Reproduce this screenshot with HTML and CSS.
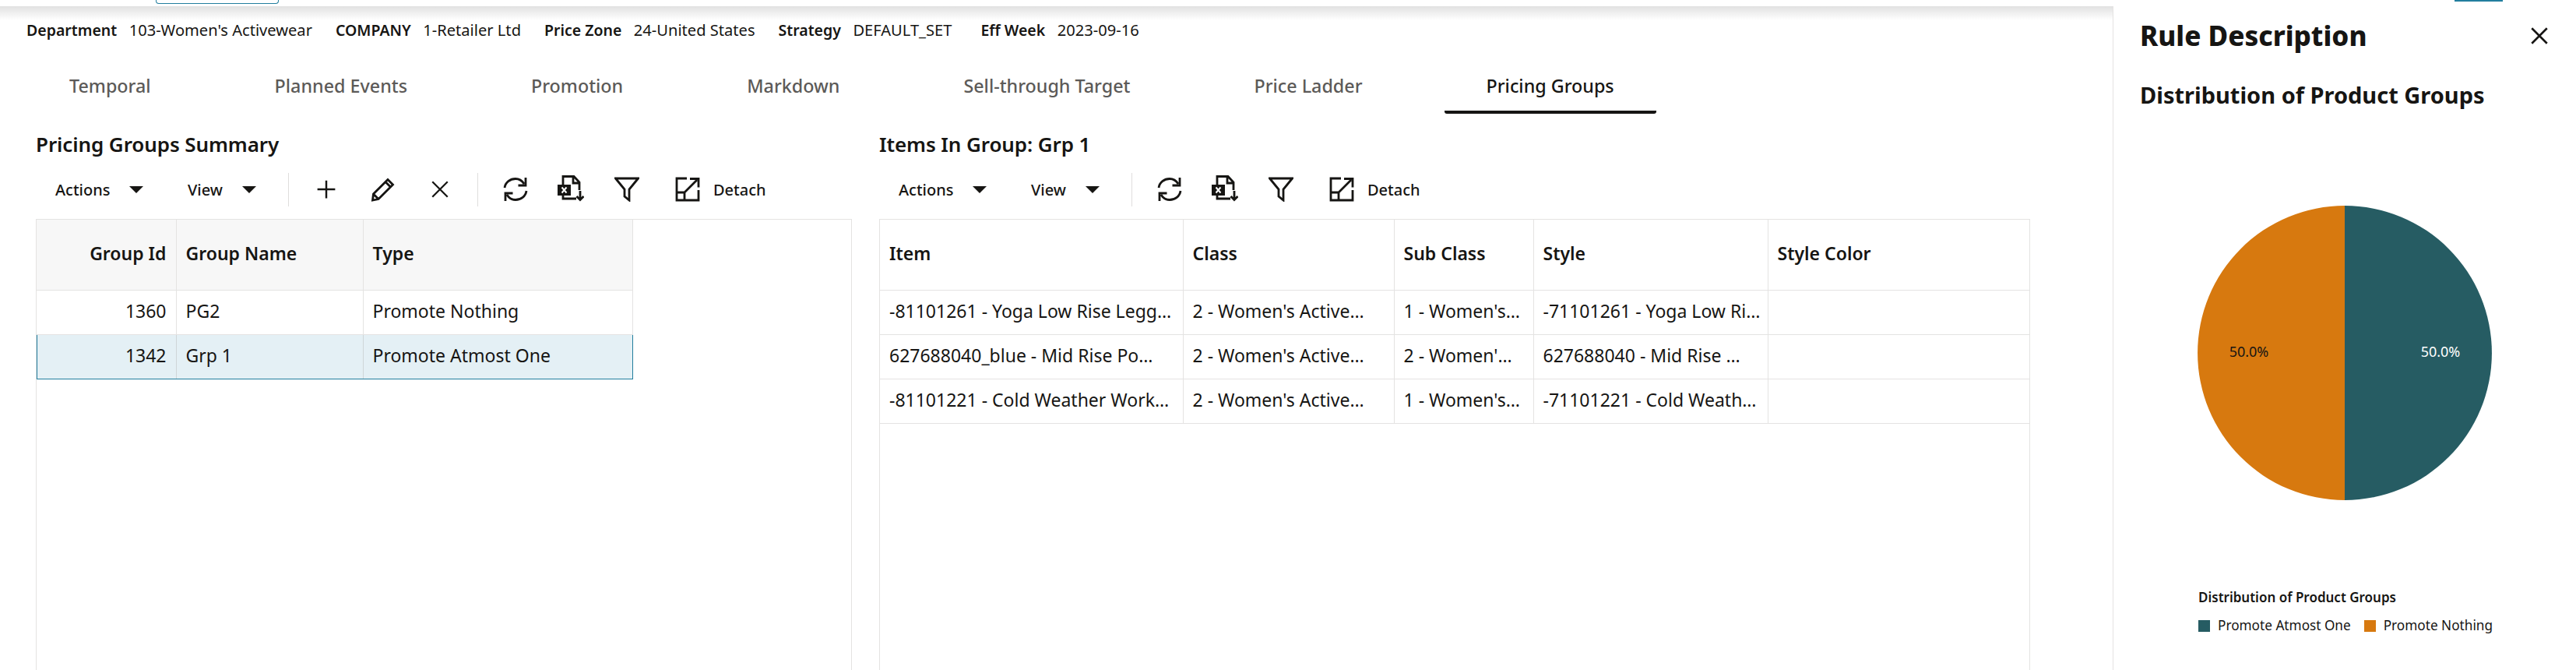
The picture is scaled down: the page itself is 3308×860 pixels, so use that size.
FILE: index.html
```html
<!DOCTYPE html>
<html lang="en">
<head>
    <meta charset="UTF-8">
    <title>Pricing Groups</title>
    <link rel="stylesheet" href="styles.css">
</head>
<body>
    <svg class="sprites" width="0" height="0">
        <symbol id="i-plus" viewBox="0 0 32 32"><path d="M16 3v26M3 16h26"/></symbol>
        <symbol id="i-pencil" viewBox="0 0 32 32"><path d="M2.500 30l1-8L22 3.500l6.500 6.500L10 28.500zM3.500 22l6.500 6.500M19 6.500l6.500 6.500"/></symbol>
        <symbol id="i-close" viewBox="0 0 32 32"><path d="M4 4l24 24M28 4L4 28"/></symbol>
        <symbol id="i-refresh" viewBox="0 0 32 32"><path d="M2 14C3 7 9 2.500 16 2.500c4.500 0 8.500 2.500 11 6.500M29 1v10h-9.500M30 18c-1 7-7 11.500-14 11.500-4.500 0-8.500-2.500-11-6.500M3 31V21h9.500"/></symbol>
        <symbol id="i-excel" viewBox="0 0 36 36"><path d="M9 12V1.500h14L30 9v10M22 2v8h8M9 26v4h17"/><rect class="solid" x="2" y="12" width="17" height="14"/><path class="knock" d="M7.500 15.500l6 7M13.500 15.500l-6 7"/><path d="M31 20v11.500M26.500 27l4.500 4.500 4.500-4.500"/></symbol>
        <symbol id="i-filter" viewBox="0 0 32 32"><path d="M1.500 2h29L19 16v14l-6-5v-9z"/></symbol>
        <symbol id="i-detach" viewBox="0 0 32 32"><path d="M15 2H2v28h28V17M2 20h10v10M12 20L28 4M19 2.500h11v11"/></symbol>
    </svg>

    <div class="topstrip">
        <span class="topbtn"></span>
        <span class="topbtn-right"></span>
    </div>

    <div class="page">
        <main class="content">
            <div class="infobar">
                <span class="info"><b>Department</b>103-Women's Activewear</span>
                <span class="info"><b>COMPANY</b>1-Retailer Ltd</span>
                <span class="info"><b>Price Zone</b>24-United States</span>
                <span class="info info-strategy"><b>Strategy</b>DEFAULT_SET</span>
                <span class="info"><b>Eff Week</b>2023-09-16</span>
            </div>

            <div class="tabs">
                <a class="tab">Temporal</a>
                <a class="tab">Planned Events</a>
                <a class="tab">Promotion</a>
                <a class="tab">Markdown</a>
                <a class="tab">Sell-through Target</a>
                <a class="tab">Price Ladder</a>
                <a class="tab active">Pricing Groups</a>
            </div>

            <div class="panes">
                <section class="pane pane-groups">
                    <h2 class="pane-title">Pricing Groups Summary</h2>
                    <div class="toolbar">
                        <span class="menu menu-actions">Actions<i class="caret"></i></span>
                        <span class="menu menu-view">View<i class="caret"></i></span>
                        <span class="sep"></span>
                        <svg class="icon icon-plus"><use href="#i-plus"/></svg>
                        <svg class="icon icon-pencil"><use href="#i-pencil"/></svg>
                        <svg class="icon icon-close"><use href="#i-close"/></svg>
                        <span class="sep"></span>
                        <svg class="icon icon-refresh"><use href="#i-refresh"/></svg>
                        <svg class="icon icon-excel"><use href="#i-excel"/></svg>
                        <svg class="icon icon-filter"><use href="#i-filter"/></svg>
                        <svg class="icon icon-detach"><use href="#i-detach"/></svg>
                        <span class="detach">Detach</span>
                    </div>
                    <div class="grid-frame">
                        <table class="grid grid-groups">
                            <colgroup><col class="c-id"><col class="c-name"><col class="c-type"></colgroup>
                            <thead>
                                <tr><th class="num">Group Id</th><th>Group Name</th><th>Type</th></tr>
                            </thead>
                            <tbody>
                                <tr><td class="num">1360</td><td>PG2</td><td>Promote Nothing</td></tr>
                                <tr class="selected"><td class="num">1342</td><td>Grp 1</td><td>Promote Atmost One</td></tr>
                            </tbody>
                        </table>
                    </div>
                </section>

                <section class="pane pane-items">
                    <h2 class="pane-title">Items In Group: Grp 1</h2>
                    <div class="toolbar">
                        <span class="menu menu-actions">Actions<i class="caret"></i></span>
                        <span class="menu menu-view">View<i class="caret"></i></span>
                        <span class="sep"></span>
                        <svg class="icon icon-refresh"><use href="#i-refresh"/></svg>
                        <svg class="icon icon-excel"><use href="#i-excel"/></svg>
                        <svg class="icon icon-filter"><use href="#i-filter"/></svg>
                        <svg class="icon icon-detach"><use href="#i-detach"/></svg>
                        <span class="detach">Detach</span>
                    </div>
                    <div class="grid-frame">
                        <table class="grid grid-items">
                            <colgroup><col class="c-item"><col class="c-class"><col class="c-sub"><col class="c-style"><col class="c-color"></colgroup>
                            <thead>
                                <tr><th>Item</th><th>Class</th><th>Sub Class</th><th>Style</th><th>Style Color</th></tr>
                            </thead>
                            <tbody>
                                <tr><td>-81101261 - Yoga Low Rise Legg…</td><td>2 - Women's Active…</td><td>1 - Women's…</td><td>-71101261 - Yoga Low Ri…</td><td></td></tr>
                                <tr><td>627688040_blue - Mid Rise Po…</td><td>2 - Women's Active…</td><td>2 - Women'…</td><td>627688040 - Mid Rise …</td><td></td></tr>
                                <tr><td>-81101221 - Cold Weather Work…</td><td>2 - Women's Active…</td><td>1 - Women's…</td><td>-71101221 - Cold Weath…</td><td></td></tr>
                            </tbody>
                        </table>
                    </div>
                </section>
            </div>
        </main>

        <aside class="drawer">
            <div class="drawer-head">
                <h1 class="drawer-title">Rule Description</h1>
                <svg class="icon icon-dismiss"><use href="#i-close"/></svg>
            </div>
            <h2 class="chart-title">Distribution of Product Groups</h2>
            <svg class="pie" viewBox="0 0 378 378">
                <path class="slice-teal" d="M189 0A189 189 0 0 1 189 378z"/>
                <path class="slice-orange" d="M189 378A189 189 0 0 1 189 0z"/>
                <text class="pie-label" x="66" y="193.500">50.0%</text>
                <text class="pie-label pie-label-light" x="312" y="193.500">50.0%</text>
            </svg>
            <div class="legend">
                <div class="legend-title">Distribution of Product Groups</div>
                <div class="legend-items">
                    <span class="legend-item"><i class="swatch swatch-teal"></i>Promote Atmost One</span>
                    <span class="legend-item"><i class="swatch swatch-orange"></i>Promote Nothing</span>
                </div>
            </div>
        </aside>
    </div>
</body>
</html>
```

FILE: styles.css
```css
* {
    margin: 0;
    padding: 0;
    box-sizing: border-box;
}
html, body {
    height: 860px;
    overflow: hidden;
}
body {
    background: #fff;
    color: #161513;
    font-family: "Noto Sans", "Open Sans", sans-serif;
}
.sprites {
    position: absolute;
}

/* top strip */
.topstrip {
    display: flex;
    justify-content: space-between;
    height: 8px;
    padding: 0 94px 0 200px;
}
.topbtn {
    width: 158px;
    height: 5px;
    border: 1px solid #227e9e;
    border-top: 0;
    border-radius: 0 0 4px 4px;
}
.topbtn-right {
    width: 62px;
    height: 2px;
    background: #227e9e;
}
.page {
    display: flex;
    height: 852px;
}

/* main area */
.content {
    width: 2714px;
    border-right: 1px solid #e4e3e2;
    background: linear-gradient(#e1e1e1, #fff 18px);
}
.infobar {
    display: flex;
    gap: 30px;
    height: 62px;
    padding: 20px 0 0 34px;
    font-size: 20.100px;
    line-height: 22px;
}
.info b {
    font-size: 19.500px;
    font-weight: 600;
    margin-right: 15.500px;
}
.info-strategy {
    margin-right: 7px;
}
.tabs {
    display: flex;
    gap: 51px;
    height: 76px;
    padding: 8px 0 0 35px;
}
.tab {
    padding: 16px 54px 0;
    height: 68px;
    font-size: 23.300px;
    line-height: 32px;
    font-weight: 500;
    color: #5c5a58;
}
.tab.active {
    color: #161513;
    border-bottom: 4px solid #161513;
    border-radius: 0 0 3px 3px;
}
.panes {
    display: flex;
    gap: 35px;
    padding-left: 46px;
}
.pane-groups {
    width: 1048px;
}
.pane-items {
    width: 1478px;
}
.pane-title {
    height: 73px;
    padding-top: 21px;
    font-size: 26px;
    line-height: 36px;
    font-weight: 600;
    letter-spacing: -.1px;
}

/* toolbar */
.toolbar {
    display: flex;
    align-items: center;
    height: 48px;
    font-size: 20px;
    font-weight: 500;
}
.menu {
    display: flex;
    align-items: center;
}
.menu-actions {
    margin-left: 25px;
    width: 170px;
}
.menu-view {
    width: 129px;
}
.caret {
    margin-left: 25px;
    border-left: 9px solid transparent;
    border-right: 9px solid transparent;
    border-top: 9px solid #161513;
}
.sep {
    width: 1px;
    height: 43px;
    background: #dfdedd;
}
.icon {
    fill: none;
    stroke: #161513;
    stroke-width: 2.800;
    flex: none;
}
.icon-plus { width: 28px; height: 28px; margin: 0 43px 0 34px; }
.icon-pencil { width: 32px; height: 32px; margin-right: 44px; }
.icon-close { width: 26px; height: 26px; margin-right: 35px; }
.icon-refresh { width: 32px; height: 32px; margin: 0 36px 0 32px; }
.icon-excel { width: 36px; height: 36px; margin-right: 39px; }
.icon-filter { width: 32px; height: 32px; margin-right: 46px; }
.icon-detach { width: 32px; height: 32px; margin-right: 17px; }
.solid { fill: #161513; stroke: none; }
.knock { stroke: #fff; stroke-width: 2; }

/* grids */
.grid-frame {
    height: 579px;
    margin-top: 14px;
    border: 1px solid #e4e3e2;
    border-bottom: 0;
}
.grid {
    border-collapse: collapse;
    table-layout: fixed;
    font-size: 23px;
}
.grid-groups { width: 765px; }
.grid-items { width: 1476px; }
.c-id { width: 179px; }
.c-name { width: 240px; }
.c-type { width: 346px; }
.c-item { width: 389px; }
.c-class { width: 271px; }
.c-sub { width: 179px; }
.c-style { width: 301px; }
.c-color { width: 336px; }
.grid th, .grid td {
    border-right: 1px solid #e4e3e2;
    border-bottom: 1px solid #e4e3e2;
    padding: 0 12px 3px;
    text-align: left;
    white-space: nowrap;
    overflow: hidden;
}
.grid th {
    height: 90px;
    font-weight: 600;
}
.grid td {
    height: 57px;
}
.grid-groups th {
    background: #f7f7f7;
}
.grid .num {
    text-align: right;
}
.grid .selected td {
    background: #e4f0f5;
    border-top: 1px solid #227e9e;
    border-bottom: 1px solid #227e9e;
    border-right-color: #cfd6d8;
}
.grid .selected td:last-child {
    border-right-color: #227e9e;
}
.grid .selected td:first-child {
    box-shadow: inset 1px 0 #227e9e;
}

/* right drawer */
.drawer {
    flex: 1;
    padding: 0 34px;
}
.drawer-head {
    display: flex;
    justify-content: space-between;
    align-items: center;
    height: 72px;
    padding-top: 4px;
}
.drawer-title {
    font-size: 35px;
    font-weight: 800;
    line-height: 44px;
}
.icon-dismiss {
    width: 26px;
    height: 26px;
    stroke-width: 3.200;
}
.chart-title {
    margin-top: 23px;
    font-size: 29px;
    line-height: 38px;
    font-weight: 700;
}
.pie {
    display: block;
    width: 378px;
    height: 378px;
    margin: 123px 0 0 74px;
}
.slice-teal { fill: #265c63; }
.slice-orange { fill: #d7790f; }
.pie-label {
    font-size: 18px;
    text-anchor: middle;
    fill: #161513;
}
.pie-label-light {
    fill: #fff;
}
.legend {
    margin: 113px 0 0 75px;
    font-size: 17.200px;
    line-height: 24px;
}
.legend-title {
    font-size: 17px;
    font-weight: 600;
}
.legend-items {
    display: flex;
    gap: 17px;
    margin-top: 12px;
}
.legend-item {
    display: flex;
    align-items: center;
    white-space: nowrap;
}
.swatch {
    width: 15px;
    height: 15px;
    margin-right: 10px;
}
.swatch-teal { background: #265c63; }
.swatch-orange { background: #d7790f; }
```
